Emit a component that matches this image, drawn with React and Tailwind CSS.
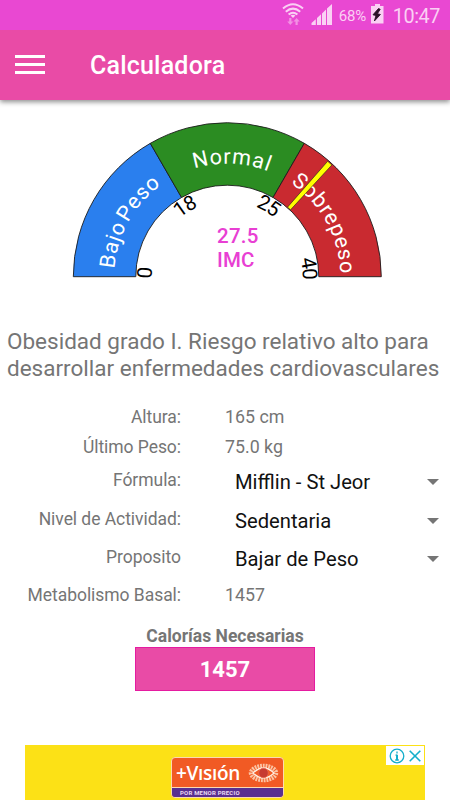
import React, { useState } from 'react';

const CX = 227.3;
const CY = 276.7;
const OUTER = 154;
const INNER = 91.5;

// 0 is the left end of the gauge and 180 the right end
const point = (r, deg) => {
  const a = (deg * Math.PI) / 180;
  return [CX - r * Math.cos(a), CY - r * Math.sin(a)];
};

const zonePath = (from, to) => {
  const [x1, y1] = point(OUTER, from);
  const [x2, y2] = point(OUTER, to);
  const [x3, y3] = point(INNER, to);
  const [x4, y4] = point(INNER, from);
  return `M${x1} ${y1} A${OUTER} ${OUTER} 0 0 1 ${x2} ${y2} L${x3} ${y3} A${INNER} ${INNER} 0 0 0 ${x4} ${y4} Z`;
};

// The text arcs go 20 degrees past both ends so that no letter is cut
const textArc = (r) => {
  const [x1, y1] = point(r, -20);
  const [x2, y2] = point(r, 200);
  return `M${x1} ${y1} A${r} ${r} 0 1 1 ${x2} ${y2}`;
};

const offset = (r, deg) => (r * (deg + 20) * Math.PI) / 180;

const zones = [
  { name: 'Bajo Peso', from: 0, to: 60, color: '#2a7fee', start: 4, spacing: 0.75, wordSpacing: -3.5 },
  { name: 'Normal', from: 60, to: 120, color: '#2b8c22', start: 73, spacing: 0.9, wordSpacing: 0 },
  { name: 'Sobrepeso', from: 120, to: 180, color: '#c92a30', start: 124, spacing: 0.6, wordSpacing: 0 },
];

const ticks = [
  { value: '0', middle: 2.8 },
  { value: '18', middle: 58.5 },
  { value: '25', middle: 119.8 },
  { value: '40', middle: 173.6 },
];

const Gauge = ({ value }) => {
  const needle = [point(INNER + 0.5, 130.9), point(OUTER - 1, 131), point(OUTER - 1, 133.1), point(INNER + 0.5, 133.4)];

  return (
    <svg className="block h-[170px] w-[450px]" viewBox="0 115 450 170" fontFamily="Roboto, sans-serif">
      <path id="zoneArc" d={textArc(113)} fill="none" />
      <path id="tickArc" d={textArc(75.5)} fill="none" />
      {zones.map((zone) => (
        <path key={zone.name} d={zonePath(zone.from, zone.to)} fill={zone.color} stroke="#1c1c1c" strokeWidth="0.9" />
      ))}
      {zones.map((zone) => (
        <text key={zone.name} fontSize="21.5" fill="#fff" letterSpacing={zone.spacing} wordSpacing={zone.wordSpacing}>
          <textPath href="#zoneArc" startOffset={offset(113, zone.start)}>{zone.name}</textPath>
        </text>
      ))}
      {ticks.map((tick) => (
        <text key={tick.value} fontSize="20.5" fill="#000" textAnchor="middle" letterSpacing={tick.value.length > 1 ? -1.2 : 0}>
          <textPath href="#tickArc" startOffset={offset(75.5, tick.middle)}>{tick.value}</textPath>
        </text>
      ))}
      <polygon points={needle.map((p) => p.join(',')).join(' ')} fill="#ff0" stroke="#222" strokeWidth="0.6" />
      <text x="217" y="242.5" fontSize="20.5" fontWeight="500" fill="#e83fd3" textLength="41.5">{value}</text>
      <text x="217" y="266.5" fontSize="20.5" fontWeight="500" fill="#e83fd3" textLength="37.5">IMC</text>
    </svg>
  );
};

const StatusBar = () => (
  <div className="z-10 flex h-[30px] shrink-0 items-center justify-end bg-[#e948d2] pr-[10px] text-[#fad0f4]">
    <svg className="h-[30px] w-[52px]" viewBox="282 0 52 30" fill="none">
      <g stroke="#fad0f4" strokeWidth="2">
        <path d="M283 8.600 Q293 0 303 8.600" />
        <path d="M285.8 11.700 Q293 5.600 300.2 11.700" />
        <path d="M288.6 14.600 Q293 11 297.4 14.600" />
      </g>
      <path d="M290.6 15.6 Q293 13.900 295.4 15.600 L293 17.900Z" fill="#fad0f4" />
      <path d="M289.2 18v3.500h-2l3.100 3.600 3.100-3.600h-2V18zM295.500 25v-3.500h-2l3.100-3.600 3.100 3.600h-2V25z" fill="#f291e4" />
      <path d="M311.500 25v-2l4.300-3.800V25zM317 25v-7l4-3.800V25zM322 25V13.500l4-4V25zM327 25V8.600l5-4.600v21z" fill="#fad0f4" />
    </svg>
    <span className="ml-[5px] w-[29px] pt-[3px] text-[15px] leading-[27px] tracking-[-0.200px]">68%</span>
    <svg className="ml-0.5 h-[30px] w-[14px]" viewBox="370 0 14 30">
      <path d="M371 6h4V4h5v2h3.500v17.500H371z" fill="#fad0f4" />
      <path d="M378.500 8.500l-5.500 6.300 3 .7-1.600 5.500 6-6.500-3-.8 2.800-4.400z" fill="#2b1028" stroke="#2b1028" strokeWidth="0.900" />
    </svg>
    <span className="ml-[9px] pt-[3px] text-[19.800px] leading-[27px] tracking-[-0.400px]">10:47</span>
  </div>
);

const AppBar = () => (
  <header className="flex h-[69.500px] shrink-0 items-center bg-[#e94ba6] pl-[15px] shadow-[0_2px_5px_rgba(0,0,0,0.45)]">
    <button className="flex w-[30px] flex-col gap-[5px]">
      <span className="h-[3px] bg-white" />
      <span className="h-[3px] bg-white" />
      <span className="h-[3px] bg-white" />
    </button>
    <h1 className="ml-[45px] pt-[3px] text-[25px] font-medium leading-8 tracking-[0.200px] text-white">Calculadora</h1>
  </header>
);

const InfoRow = ({ label, value, className }) => (
  <div className={`flex text-[17.500px] text-[#757575] ${className}`}>
    <span className="w-[181px] text-right tracking-[-0.050px]">{label}</span>
    <span className="ml-[44px] text-[17.800px]">{value}</span>
  </div>
);

const SelectRow = ({ label, value }) => (
  <div className="flex h-[38.500px] text-[17.500px] text-[#757575]">
    <span className="w-[181px] text-right leading-[36px] tracking-[-0.050px]">{label}</span>
    <button className="ml-[54px] flex flex-1 items-center pr-[11px] pt-[2px] text-[20.200px] text-[#111]">
      <span className="flex-1 text-left">{value}</span>
      <svg className="h-1.5 w-3" viewBox="0 0 12 6">
        <path d="M0 0h12L6 6z" fill="#757575" />
      </svg>
    </button>
  </div>
);

const AdBanner = () => (
  <div className="mx-[25px] flex h-[55px] overflow-hidden bg-[#fce116]">
    <div className="ml-[146px] mt-3 flex h-[41px] w-[113px] flex-col overflow-hidden rounded border border-[#fbd9b0] bg-[#f15a24]">
      <div className="flex h-[29px] shrink-0 items-center pl-1">
        <span className="w-[66px] whitespace-nowrap font-['Open_Sans'] text-[19px] font-semibold leading-7 tracking-[-0.300px] text-white">+Vısıón</span>
        <svg className="ml-[6px] h-5 w-[31px]" viewBox="0 0 31 20" fill="none">
          <ellipse cx="15.500" cy="10" rx="12.500" ry="7" stroke="#fbc4a4" strokeWidth="4.500" strokeDasharray="1.800 0.900" />
          <path d="M5 10Q15.500 0 26 10Q15.500 20 5 10Z" stroke="#fff0e4" strokeWidth="1.200" />
          <circle cx="15.500" cy="10" r="4.800" fill="#c73b32" stroke="#e9694c" strokeWidth="0.800" />
        </svg>
      </div>
      <div className="flex-1 border-t border-[#fbd9b0] bg-[#59308f] pl-2 text-[6px] font-bold leading-[9px] tracking-[0.200px] text-[#e9d9f1]">POR MENOR PRECIO</div>
    </div>
    <div className="ml-auto mr-px mt-px flex h-[19px] w-[38px] items-center justify-center gap-1 bg-white">
      <svg className="h-4 w-4" viewBox="0 0 16 16" fill="none" stroke="#14aecb" strokeWidth="1.300">
        <circle cx="8" cy="8" r="6.800" />
        <path d="M8 3.500v2M6.500 7.200H8M6.200 12h3.600" />
        <path d="M8 6.800v5.500" strokeWidth="2" />
      </svg>
      <svg className="h-3 w-3" viewBox="0 0 12 12" fill="none" stroke="#14aecb" strokeWidth="1.600">
        <path d="M.7.700l10.600 10.600M11.300.700L.7 11.300" />
      </svg>
    </div>
  </div>
);

const App = () => {
  const [calories] = useState(1457);

  return (
    <div className="flex h-[800px] w-[450px] flex-col overflow-hidden bg-white font-[Roboto,sans-serif]">
      <StatusBar />
      <AppBar />
      <main className="flex flex-1 flex-col pt-[15.500px]">
        <Gauge value="27.5" />
        <p className="mt-[43px] whitespace-nowrap pl-[7px] text-[22.500px] leading-[27px] text-[#757575]">
          Obesidad grado I. Riesgo relativo alto para
          <br />
          desarrollar enfermedades cardiovasculares
        </p>

        <div className="mt-[20px] flex flex-col">
          <InfoRow label="Altura:" value="165 cm" className="leading-[30px]" />
          <InfoRow label="Último Peso:" value="75.0 kg" className="leading-[30px]" />
          <SelectRow label="Fórmula:" value="Mifflin - St Jeor" />
          <SelectRow label="Nivel de Actividad:" value="Sedentaria" />
          <SelectRow label="Proposito" value="Bajar de Peso" />
          <InfoRow label="Metabolismo Basal:" value={calories} className="leading-[34px]" />
        </div>

        <div className="mt-[13px] flex flex-col items-center">
          <span className="text-[17.500px] font-bold leading-[22px] text-[#757575]">Calorías Necesarias</span>
          <div className="flex h-[44px] w-[180px] items-center justify-center border border-[#e51ba0] bg-[#e94ba6] pt-[2px] text-[22px] font-bold text-white">
            {calories}
          </div>
        </div>
      </main>
      <AdBanner />
    </div>
  );
};

export default App;
